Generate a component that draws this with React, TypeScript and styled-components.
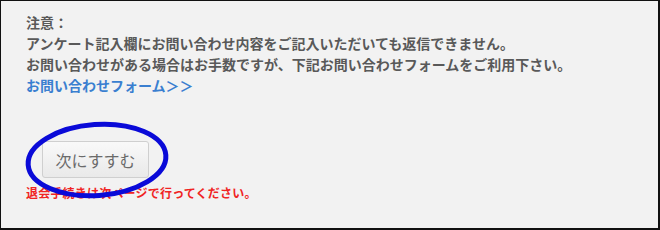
import React from "react";
import styled, { createGlobalStyle } from "styled-components";

const Global = createGlobalStyle`
  html, body { margin: 0; padding: 0; background: #fff; }
  body { font-family: "Noto Sans CJK JP", "Noto Sans", sans-serif; }
`;

const Panel = styled.div`
  position: relative;
  box-sizing: border-box;
  width: 660px;
  height: 230px;
  background: #f2f2f2;
  border-top: 1px solid #111;
  border-left: 1px solid #111;
  border-right: 2px solid #111;
  border-bottom: 2px solid #111;
  padding: 11px 0 0 25px;
`;

const Notice = styled.div`
  font-size: 14px;
  line-height: 21px;
  font-weight: 700;
  color: #595959;
`;

const Line = styled.div``;

const FormLink = styled.a`
  display: block;
  color: #3a7fd0;
  text-decoration: none;
  font-weight: 700;
`;

const ButtonRow = styled.div`
  margin: 45px 0 0 16px;
`;

const NextButton = styled.button`
  box-sizing: border-box;
  width: 107px;
  height: 37px;
  border: 1px solid #cfcfcf;
  border-radius: 3px;
  background: linear-gradient(#f9f9f9, #e9e9e9);
  color: #6a6a6a;
  font-family: "Noto Sans CJK JP", sans-serif;
  font-size: 16px;
  font-weight: 400;
  padding: 0;
  cursor: pointer;
`;

const Warning = styled.div`
  margin-top: 6px;
  font-size: 12px;
  line-height: 18px;
  font-weight: 700;
  color: #f02424;
  letter-spacing: 0.2px;
`;

const Annotation = styled.svg`
  position: absolute;
  left: 0;
  top: 0;
  pointer-events: none;
`;

export default function App() {
  return (
    <>
      <Global />
      <Panel>
        <Notice>
          <Line>注意：</Line>
          <Line>アンケート記入欄にお問い合わせ内容をご記入いただいても返信できません。</Line>
          <Line>お問い合わせがある場合はお手数ですが、下記お問い合わせフォームをご利用下さい。</Line>
          <FormLink href="#">お問い合わせフォーム＞＞</FormLink>
        </Notice>
        <ButtonRow>
          <NextButton>次にすすむ</NextButton>
        </ButtonRow>
        <Warning>退会手続きは次ページで行ってください。</Warning>
        <Annotation width="660" height="230" viewBox="0 0 660 230">
          <ellipse
            cx="96"
            cy="159"
            rx="69"
            ry="35.5"
            fill="none"
            stroke="#0a0ad8"
            strokeWidth="5"
            transform="rotate(-4 96 159)"
          />
        </Annotation>
      </Panel>
    </>
  );
}
